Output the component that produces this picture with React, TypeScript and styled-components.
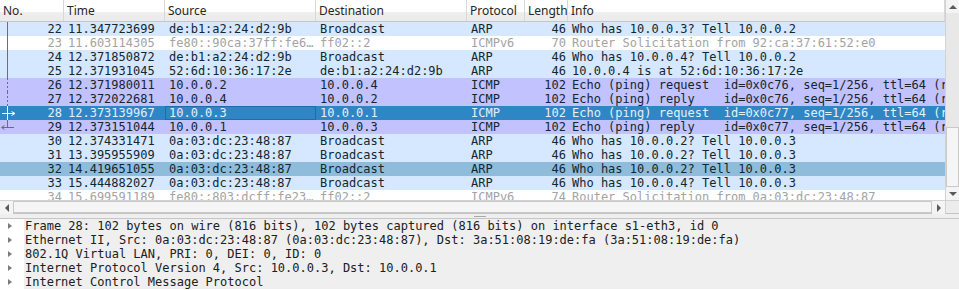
import React from 'react';
import styled, { createGlobalStyle } from 'styled-components';

const GlobalStyle = createGlobalStyle`
  html, body {
    margin: 0;
    padding: 0;
    background: #ffffff;
  }
  body {
    width: 959px;
    height: 290px;
    overflow: hidden;
  }
`;

const MONO = `'DejaVu Sans Mono', 'Liberation Mono', monospace`;
const UI = `'Noto Sans', 'Open Sans', sans-serif`;

// column edges: 0, 64, 165, 316, 467, 525, 568
const COLS = '64px 101px 151px 151px 58px 43px 1fr';

type Tone = 'arp' | 'icmp' | 'muted' | 'selected' | 'hover';
type Mark = 'line' | 'dash' | 'request' | 'reply' | 'none';

const tones: Record<Tone, { bg: string; fg: string }> = {
  arp: { bg: '#d6e8ff', fg: '#12272e' },
  icmp: { bg: '#c2c2ff', fg: '#12272e' },
  muted: { bg: '#ffffff', fg: '#a3a3a3' },
  selected: { bg: '#2f86c5', fg: '#e6eff8' },
  hover: { bg: '#8fbcda', fg: '#12272e' },
};

const Window = styled.div`
  width: 959px;
  height: 290px;
  display: flex;
  flex-direction: column;
  overflow: hidden;
  background: #ffffff;
`;

const ListPane = styled.div`
  display: grid;
  grid-template-columns: 945px 14px;
  grid-template-rows: 200px 14px;
  height: 214px;
  flex: none;
`;

const ListView = styled.div`
  overflow: hidden;
  display: flex;
  flex-direction: column;
`;

const HeaderRow = styled.div`
  display: grid;
  grid-template-columns: ${COLS};
  height: 21px;
  flex: none;
  border-bottom: 1px solid #c6c6c6;
  background: linear-gradient(#ffffff 0%, #ffffff 55%, #eeeeee 60%, #ebebeb 100%);
  font: 12px/21px ${UI};
  color: #262626;
`;

const HeaderCell = styled.div`
  padding-left: 3px;
  border-right: 1px solid #d8d8d8;
  white-space: nowrap;
  overflow: hidden;
`;

const Rows = styled.div`
  flex: 1;
  overflow: hidden;
`;

const PacketRow = styled.div<{ $tone: Tone }>`
  display: grid;
  grid-template-columns: ${COLS};
  height: 14px;
  font: 12px/14px ${MONO};
  background: ${(p) => tones[p.$tone].bg};
  color: ${(p) => tones[p.$tone].fg};
`;

const Cell = styled.div<{ $right?: boolean }>`
  padding: 0 2px 0 4px;
  min-width: 0;
  overflow: hidden;
  white-space: pre;
  text-align: ${(p) => (p.$right ? 'right' : 'left')};
`;

const NoCell = styled(Cell)`
  position: relative;
`;

const FocusCell = styled(Cell)<{ $focus?: boolean }>`
  box-shadow: ${(p) => (p.$focus ? 'inset 0 0 0 1px #1f6ca8' : 'none')};
`;

const MarkSvg = styled.svg`
  position: absolute;
  left: 0;
  top: 0;
`;

const VScroll = styled.div`
  grid-row: 1;
  grid-column: 2;
  display: flex;
  flex-direction: column;
  background: #e8e8e8;
  border-left: 1px solid #d2d2d2;
`;

const HScroll = styled.div`
  grid-row: 2;
  grid-column: 1;
  display: flex;
  background: #e8e8e8;
  border-top: 1px solid #d2d2d2;
  border-bottom: 1px solid #c4c4c4;
`;

const Corner = styled.div`
  grid-row: 2;
  grid-column: 2;
  background: #ececec;
  border-top: 1px solid #d2d2d2;
  border-left: 1px solid #d2d2d2;
  border-bottom: 1px solid #c4c4c4;
`;

const ScrollButton = styled.div<{ $side?: 'start' | 'end' }>`
  flex: none;
  width: 13px;
  height: 13px;
  display: flex;
  align-items: center;
  justify-content: center;
  background: #f4f4f4;
`;

const Track = styled.div<{ $vertical?: boolean }>`
  flex: 1;
  display: flex;
  flex-direction: ${(p) => (p.$vertical ? 'column' : 'row')};
  justify-content: flex-end;
`;

const Thumb = styled.div<{ $vertical?: boolean }>`
  flex: ${(p) => (p.$vertical ? 'none' : '1')};
  height: ${(p) => (p.$vertical ? '58px' : 'auto')};
  background: #f5f5f5;
  border: 1px solid #c9c9c9;
  margin-right: ${(p) => (p.$vertical ? '0' : '0')};
`;

const Arrow = styled.span<{ $dir: 'up' | 'down' | 'left' | 'right' }>`
  width: 0;
  height: 0;
  border-style: solid;
  border-color: transparent;
  ${(p) =>
    p.$dir === 'up'
      ? 'border-width: 0 4px 4px 4px; border-bottom-color: #5a5a5a;'
      : p.$dir === 'down'
      ? 'border-width: 4px 4px 0 4px; border-top-color: #5a5a5a;'
      : p.$dir === 'left'
      ? 'border-width: 4px 4px 4px 0; border-right-color: #5a5a5a;'
      : 'border-width: 4px 0 4px 4px; border-left-color: #5a5a5a;'}
`;

const Splitter = styled.div`
  flex: none;
  height: 4px;
  display: flex;
  justify-content: center;
  align-items: center;
  background: #efefef;
`;

const Grip = styled.div`
  width: 12px;
  height: 1px;
  background-image: radial-gradient(circle, #a8a8a8 0.6px, transparent 0.7px);
  background-size: 2px 1px;
`;

const DetailPane = styled.div`
  flex: 1;
  border-top: 1px solid #c6c6c6;
  background: #ffffff;
  font: 12px/14px ${MONO};
  color: #202020;
`;

const TreeRow = styled.div`
  display: flex;
  height: 14px;
`;

const Branch = styled.div`
  flex: none;
  width: 24px;
  display: flex;
  align-items: center;
  padding-left: 8px;
  box-sizing: border-box;
`;

const Expander = styled.span`
  width: 0;
  height: 0;
  border-style: solid;
  border-color: transparent transparent transparent #7c7c7c;
  border-width: 3.5px 0 3.5px 4px;
`;

const TreeLabel = styled.div`
  flex: 1;
  padding-left: 1px;
  white-space: pre;
  overflow: hidden;
  background: #efefef;
`;

const RelatedMark: React.FC<{ kind: Mark; light?: boolean }> = ({ kind, light }) => {
  if (kind === 'none') return null;
  const c = light ? '#ffffff' : '#6e6e6e';
  return (
    <MarkSvg width="18" height="14" viewBox="0 0 18 14">
      {kind === 'line' && <line x1="7.5" y1="0" x2="7.5" y2="14" stroke={c} strokeWidth="1" />}
      {kind === 'dash' && (
        <line x1="7.5" y1="0" x2="7.5" y2="14" stroke={c} strokeWidth="1" strokeDasharray="2 2" />
      )}
      {kind === 'request' && (
        <>
          <line x1="7.5" y1="0" x2="7.5" y2="14" stroke={c} strokeWidth="1" />
          <line x1="2" y1="7.5" x2="14" y2="7.5" stroke={c} strokeWidth="1" />
          <path d="M11.5 5.5 L15 7.5 L11.5 9.5" fill="none" stroke={c} strokeWidth="1" />
        </>
      )}
      {kind === 'reply' && (
        <>
          <line x1="7.5" y1="0" x2="7.5" y2="7.5" stroke={c} strokeWidth="1" />
          <line x1="2" y1="7.5" x2="14" y2="7.5" stroke={c} strokeWidth="1" />
          <path d="M4.5 5.5 L1.5 7.5 L4.5 9.5" fill="none" stroke={c} strokeWidth="1" />
        </>
      )}
    </MarkSvg>
  );
};

type Packet = {
  no: number;
  time: string;
  src: string;
  dst: string;
  proto: string;
  len: number;
  info: string;
  tone: Tone;
  mark: Mark;
};

const packets: Packet[] = [
  { no: 22, time: '11.347723699', src: 'de:b1:a2:24:d2:9b', dst: 'Broadcast', proto: 'ARP', len: 46, info: 'Who has 10.0.0.3? Tell 10.0.0.2', tone: 'arp', mark: 'line' },
  { no: 23, time: '11.603114305', src: 'fe80::90ca:37ff:fe6…', dst: 'ff02::2', proto: 'ICMPv6', len: 70, info: 'Router Solicitation from 92:ca:37:61:52:e0', tone: 'muted', mark: 'line' },
  { no: 24, time: '12.371850872', src: 'de:b1:a2:24:d2:9b', dst: 'Broadcast', proto: 'ARP', len: 46, info: 'Who has 10.0.0.4? Tell 10.0.0.2', tone: 'arp', mark: 'line' },
  { no: 25, time: '12.371931045', src: '52:6d:10:36:17:2e', dst: 'de:b1:a2:24:d2:9b', proto: 'ARP', len: 46, info: '10.0.0.4 is at 52:6d:10:36:17:2e', tone: 'arp', mark: 'line' },
  { no: 26, time: '12.371980011', src: '10.0.0.2', dst: '10.0.0.4', proto: 'ICMP', len: 102, info: 'Echo (ping) request  id=0x0c76, seq=1/256, ttl=64 (reply in 27)', tone: 'icmp', mark: 'dash' },
  { no: 27, time: '12.372022681', src: '10.0.0.4', dst: '10.0.0.2', proto: 'ICMP', len: 102, info: 'Echo (ping) reply    id=0x0c76, seq=1/256, ttl=64 (request in 26)', tone: 'icmp', mark: 'dash' },
  { no: 28, time: '12.373139967', src: '10.0.0.3', dst: '10.0.0.1', proto: 'ICMP', len: 102, info: 'Echo (ping) request  id=0x0c77, seq=1/256, ttl=64 (reply in 29)', tone: 'selected', mark: 'request' },
  { no: 29, time: '12.373151044', src: '10.0.0.1', dst: '10.0.0.3', proto: 'ICMP', len: 102, info: 'Echo (ping) reply    id=0x0c77, seq=1/256, ttl=64 (request in 28)', tone: 'icmp', mark: 'reply' },
  { no: 30, time: '12.374331471', src: '0a:03:dc:23:48:87', dst: 'Broadcast', proto: 'ARP', len: 46, info: 'Who has 10.0.0.2? Tell 10.0.0.3', tone: 'arp', mark: 'none' },
  { no: 31, time: '13.395955909', src: '0a:03:dc:23:48:87', dst: 'Broadcast', proto: 'ARP', len: 46, info: 'Who has 10.0.0.2? Tell 10.0.0.3', tone: 'arp', mark: 'none' },
  { no: 32, time: '14.419651055', src: '0a:03:dc:23:48:87', dst: 'Broadcast', proto: 'ARP', len: 46, info: 'Who has 10.0.0.2? Tell 10.0.0.3', tone: 'hover', mark: 'none' },
  { no: 33, time: '15.444882027', src: '0a:03:dc:23:48:87', dst: 'Broadcast', proto: 'ARP', len: 46, info: 'Who has 10.0.0.4? Tell 10.0.0.3', tone: 'arp', mark: 'none' },
  { no: 34, time: '15.699591189', src: 'fe80::803:dcff:fe23…', dst: 'ff02::2', proto: 'ICMPv6', len: 74, info: 'Router Solicitation from 0a:03:dc:23:48:87', tone: 'muted', mark: 'none' },
];

const details = [
  'Frame 28: 102 bytes on wire (816 bits), 102 bytes captured (816 bits) on interface s1-eth3, id 0',
  'Ethernet II, Src: 0a:03:dc:23:48:87 (0a:03:dc:23:48:87), Dst: 3a:51:08:19:de:fa (3a:51:08:19:de:fa)',
  '802.1Q Virtual LAN, PRI: 0, DEI: 0, ID: 0',
  'Internet Protocol Version 4, Src: 10.0.0.3, Dst: 10.0.0.1',
  'Internet Control Message Protocol',
];

const headers = ['No.', 'Time', 'Source', 'Destination', 'Protocol', 'Length', 'Info'];

const App: React.FC = () => {
  return (
    <Window>
      <GlobalStyle />
      <ListPane>
        <ListView>
          <HeaderRow>
            {headers.map((h) => (
              <HeaderCell key={h}>{h}</HeaderCell>
            ))}
          </HeaderRow>
          <Rows>
            {packets.map((p) => (
              <PacketRow key={p.no} $tone={p.tone}>
                <NoCell $right>
                  <RelatedMark kind={p.mark} light={p.tone === 'selected'} />
                  {p.no}
                </NoCell>
                <Cell>{p.time}</Cell>
                <FocusCell $focus={p.tone === 'selected'}>{p.src}</FocusCell>
                <Cell>{p.dst}</Cell>
                <Cell>{p.proto}</Cell>
                <Cell $right>{p.len}</Cell>
                <Cell>{p.info}</Cell>
              </PacketRow>
            ))}
          </Rows>
        </ListView>
        <VScroll>
          <ScrollButton>
            <Arrow $dir="up" />
          </ScrollButton>
          <Track $vertical>
            <Thumb $vertical />
          </Track>
          <ScrollButton>
            <Arrow $dir="down" />
          </ScrollButton>
        </VScroll>
        <HScroll>
          <ScrollButton>
            <Arrow $dir="left" />
          </ScrollButton>
          <Track>
            <Thumb />
          </Track>
          <ScrollButton>
            <Arrow $dir="right" />
          </ScrollButton>
        </HScroll>
        <Corner />
      </ListPane>
      <Splitter>
        <Grip />
      </Splitter>
      <DetailPane>
        {details.map((d) => (
          <TreeRow key={d}>
            <Branch>
              <Expander />
            </Branch>
            <TreeLabel>{d}</TreeLabel>
          </TreeRow>
        ))}
      </DetailPane>
    </Window>
  );
};

export default App;
